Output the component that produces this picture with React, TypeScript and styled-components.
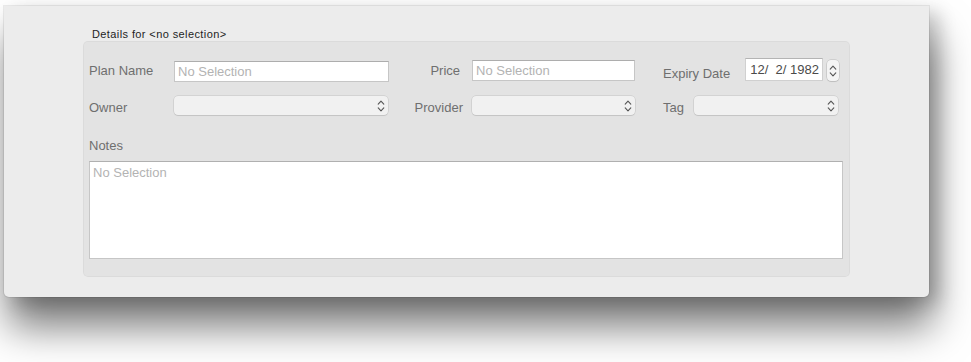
import styled, { createGlobalStyle } from "styled-components";

const GlobalStyle = createGlobalStyle`
  html, body {
    margin: 0;
    padding: 0;
    background: #ffffff;
    font-family: "Liberation Sans", Arial, sans-serif;
  }
`;

const Page = styled.div`
  width: 971px;
  height: 362px;
  overflow: hidden;
  padding: 6px 0 0 4px;
  box-sizing: border-box;
`;

const Window = styled.div`
  width: 925px;
  height: 291px;
  box-sizing: border-box;
  background: #ececec;
  border-radius: 0 0 5px 5px;
  box-shadow: 0 0 0 1px rgba(0, 0, 0, 0.07), 10px 6px 18px rgba(0, 0, 0, 0.18),
    4px 30px 40px rgba(0, 0, 0, 0.52);
  padding: 22px 79px 0 79px;
  display: flex;
  flex-direction: column;
`;

const GroupTitle = styled.div`
  font-size: 11px;
  letter-spacing: 0.4px;
  line-height: 13px;
  color: #1e1e1e;
  padding-left: 9px;
`;

const GroupBox = styled.div`
  background: #e3e3e3;
  border-radius: 5px;
  box-shadow: inset 0 0 0 1px rgba(0, 0, 0, 0.03);
  padding: 17px 7px 18px 6px;
  display: flex;
  flex-direction: column;
`;

const Row = styled.div<{ $gap?: number }>`
  display: flex;
  align-items: flex-start;
  margin-top: ${(p) => p.$gap ?? 0}px;
`;

const Label = styled.div<{ $w: number; $top: number; $right?: number; $lead?: number }>`
  width: ${(p) => p.$w}px;
  margin-left: ${(p) => p.$lead ?? 0}px;
  margin-top: ${(p) => p.$top}px;
  padding-right: ${(p) => p.$right ?? 0}px;
  box-sizing: border-box;
  text-align: ${(p) => (p.$right !== undefined ? "right" : "left")};
  font-size: 13px;
  line-height: 16px;
  color: #6f6f6f;
  white-space: nowrap;
`;

const TextField = styled.div<{ $w: number; $top: number }>`
  width: ${(p) => p.$w}px;
  height: 21px;
  margin-top: ${(p) => p.$top}px;
  box-sizing: border-box;
  background: #ffffff;
  border: 1px solid #c6c6c6;
  border-top-color: #adadad;
  padding: 1px 3px 0;
  font-size: 13px;
  line-height: 17px;
  color: #b3b3b3;
  white-space: nowrap;
`;

const DateField = styled.div`
  width: 78px;
  height: 23px;
  box-sizing: border-box;
  background: #ffffff;
  border: 1px solid #d0d0d0;
  border-top-color: #b4b4b4;
  padding: 2px 3px 0 0;
  text-align: right;
  font-size: 13px;
  line-height: 17px;
  color: #4a4a4a;
  white-space: pre;
`;

const Stepper = styled.div`
  width: 12px;
  height: 21px;
  margin: 2px 0 0 4px;
  box-sizing: border-box;
  background: #f4f4f4;
  border-radius: 4px;
  box-shadow: 0 0 0 0.5px rgba(0, 0, 0, 0.18), 0 1px 1px rgba(0, 0, 0, 0.08);
  display: flex;
  align-items: center;
  justify-content: center;
`;

const Popup = styled.div<{ $w: number }>`
  width: ${(p) => p.$w}px;
  height: 19px;
  box-sizing: border-box;
  background: #f1f1f1;
  border-radius: 4px;
  box-shadow: 0 0 0 0.5px rgba(0, 0, 0, 0.14), 0 1px 1px rgba(0, 0, 0, 0.07);
  display: flex;
  align-items: center;
  justify-content: flex-end;
  padding-right: 3px;
`;

const NotesArea = styled.div`
  height: 98px;
  margin-top: 7px;
  box-sizing: border-box;
  background: #ffffff;
  border: 1px solid #c6c6c6;
  border-top-color: #b0b0b0;
  padding: 3px 3px 0;
  font-size: 13px;
  line-height: 16px;
  color: #b3b3b3;
`;

const Chevrons = () => (
  <svg width="8" height="14" viewBox="0 0 8 14" fill="none">
    <path d="M1.2 5.2 L4 2.2 L6.8 5.2" stroke="#555" strokeWidth="1.1" strokeLinecap="round" strokeLinejoin="round" />
    <path d="M1.2 8.8 L4 11.8 L6.8 8.8" stroke="#555" strokeWidth="1.1" strokeLinecap="round" strokeLinejoin="round" />
  </svg>
);

export default function App() {
  return (
    <Page>
      <GlobalStyle />
      <Window>
        <GroupTitle>Details for &lt;no selection&gt;</GroupTitle>
        <GroupBox>
          <Row>
            <Label $w={85} $top={5}>Plan Name</Label>
            <TextField $w={215} $top={3}>No Selection</TextField>
            <Label $w={83} $top={5} $right={12}>Price</Label>
            <TextField $w={163} $top={2}>No Selection</TextField>
            <Label $w={82} $top={8} $lead={28}>Expiry Date</Label>
            <DateField>{"12/  2/ 1982"}</DateField>
            <Stepper>
              <Chevrons />
            </Stepper>
          </Row>
          <Row $gap={14}>
            <Label $w={85} $top={4}>Owner</Label>
            <Popup $w={214}>
              <Chevrons />
            </Popup>
            <Label $w={84} $top={4} $right={9}>Provider</Label>
            <Popup $w={163}>
              <Chevrons />
            </Popup>
            <Label $w={31} $top={4} $lead={28}>Tag</Label>
            <Popup $w={144}>
              <Chevrons />
            </Popup>
          </Row>
          <Label $w={120} $top={22}>Notes</Label>
          <NotesArea>No Selection</NotesArea>
        </GroupBox>
      </Window>
    </Page>
  );
}
